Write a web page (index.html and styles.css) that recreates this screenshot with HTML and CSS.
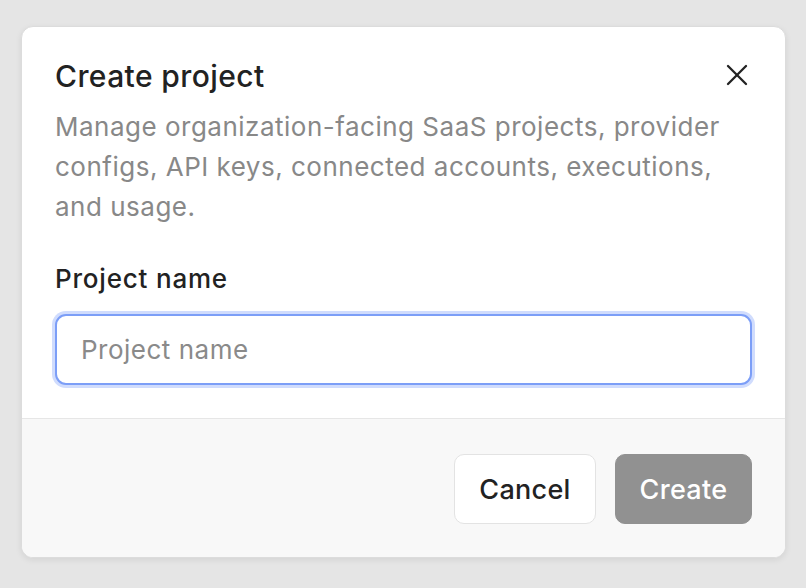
FILE: index.html
```html
<!DOCTYPE html>
<html lang="en">
<head>
    <meta charset="UTF-8">
    <meta name="viewport" content="width=device-width, initial-scale=1.0">
    <title>Create project</title>
    <link rel="stylesheet" href="styles.css">
</head>
<body>
    <div class="dialog">
        <div class="dialog-body">
            <div class="dialog-header">
                <h2>Create project</h2>
                <button class="close-button" aria-label="Close">
                    <svg xmlns="http://www.w3.org/2000/svg" width="24" height="24" viewBox="0 0 24 24" fill="none" stroke="currentColor" stroke-width="2.3" stroke-linecap="round" stroke-linejoin="round">
                        <line x1="21" y1="3" x2="3" y2="21"></line>
                        <line x1="3" y1="3" x2="21" y2="21"></line>
                    </svg>
                </button>
            </div>
            <p class="description">Manage organization-facing SaaS projects, provider configs, API keys, connected accounts, executions, and usage.</p>

            <label class="field-label" for="projectName">Project name</label>
            <input type="text" id="projectName" class="field-input" placeholder="Project name">
        </div>

        <div class="dialog-footer">
            <button class="btn btn-secondary">Cancel</button>
            <button class="btn btn-primary" disabled>Create</button>
        </div>
    </div>
</body>
</html>
```

FILE: styles.css
```css
/* Reset and base styles */
* {
    margin: 0;
    padding: 0;
    box-sizing: border-box;
}
body {
    font-family: Inter, "Noto Sans", Arial, sans-serif;
    color: #222;
    background: #e5e5e5;
    padding: 26px 20px 0 21px;
    min-height: 100vh;
}

/* Dialog */
.dialog {
    width: 765px;
    background: white;
    border: 1px solid #dcdcdc;
    border-radius: 12px;
    overflow: hidden;
    box-shadow: 0 2px 6px rgba(0, 0, 0, 0.08);
}
.dialog-body {
    padding: 30px 33px 33px;
}
.dialog-header {
    display: flex;
    justify-content: space-between;
    align-items: center;
}
.dialog-header h2 {
    font-size: 30px;
    font-weight: 500;
    line-height: 38px;
    letter-spacing: 0.4px;
}
.close-button {
    background: none;
    border: none;
    color: #222;
    display: flex;
    margin-right: 3px;
    margin-top: -2px;
    cursor: pointer;
}
.description {
    margin-top: 12px;
    font-size: 26px;
    line-height: 40px;
    letter-spacing: 0.5px;
    color: #888;
}

/* Form field */
.field-label {
    display: block;
    margin-top: 36px;
    font-size: 26px;
    font-weight: 500;
    line-height: 32px;
    letter-spacing: 0.8px;
}
.field-input {
    display: block;
    width: 100%;
    height: 71px;
    margin-top: 19px;
    padding: 0 24px;
    font-family: inherit;
    font-size: 26px;
    letter-spacing: 0.5px;
    color: #222;
    border: 2px solid #7c9ef7;
    border-radius: 11px;
    box-shadow: 0 0 0 3px #d0dcfd;
    outline: none;
}
.field-input::placeholder {
    color: #8a8a8a;
}

/* Footer */
.dialog-footer {
    display: flex;
    justify-content: flex-end;
    gap: 19px;
    padding: 35px 33px 33px;
    background: #f8f8f8;
    border-top: 1px solid #e6e6e6;
}
.btn {
    height: 70px;
    padding: 0;
    font-family: inherit;
    font-size: 27px;
    font-weight: 500;
    letter-spacing: 0.3px;
    border-radius: 10px;
}
.btn-secondary {
    background: white;
    color: #222;
    border: 1px solid #e3e3e3;
    width: 142px;
}
.btn-primary {
    background: #919191;
    color: white;
    border: 1px solid #919191;
    width: 137px;
}
```
